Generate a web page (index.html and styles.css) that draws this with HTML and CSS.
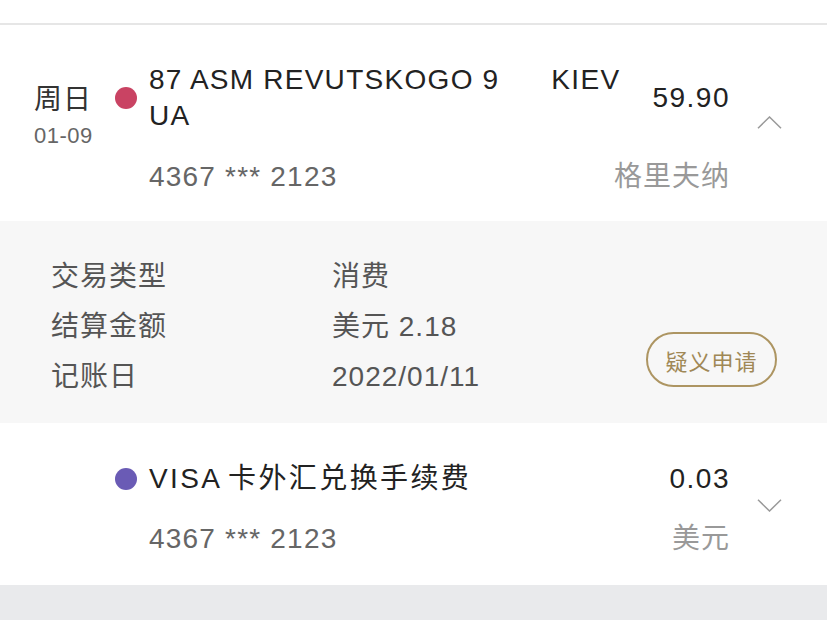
FILE: index.html
```html
<!DOCTYPE html>
<html lang="zh-CN">
<head>
<meta charset="utf-8">
<title>交易明细</title>
<link rel="stylesheet" href="styles.css">
</head>
<body>
<div class="page">
  <div class="topbar"></div>

  <div class="row row-first">
    <div class="date">
      <div class="weekday">周日</div>
      <div class="day">01-09</div>
    </div>
    <div class="body">
      <div class="top">
        <span class="dot dot-red"></span>
        <div class="title title-en">87 ASM REVUTSKOGO 9      KIEV UA</div>
        <div class="amt">59.90</div>
      </div>
      <div class="bottom">
        <div class="card">4367 *** 2123</div>
        <div class="cur">格里夫纳</div>
      </div>
    </div>
    <div class="chev">
      <svg width="25" height="13" viewBox="0 0 25 13"><polyline points="1,12.2 12.5,1 24,12.2" fill="none" stroke="#9a9a9a" stroke-width="1.5"/></svg>
    </div>
  </div>

  <div class="detail">
    <div class="kv">
      <div class="k">交易类型</div><div class="v">消费</div>
      <div class="k">结算金额</div><div class="v">美元 2.18</div>
      <div class="k">记账日</div><div class="v">2022/01/11</div>
    </div>
    <div class="btn">疑义申请</div>
  </div>

  <div class="row row-second">
    <div class="date"></div>
    <div class="body">
      <div class="top">
        <span class="dot dot-purple"></span>
        <div class="title title-cn">VISA 卡外汇兑换手续费</div>
        <div class="amt">0.03</div>
      </div>
      <div class="bottom">
        <div class="card">4367 *** 2123</div>
        <div class="cur">美元</div>
      </div>
    </div>
    <div class="chev">
      <svg width="25" height="13" viewBox="0 0 25 13"><polyline points="1,0.8 12.5,12 24,0.8" fill="none" stroke="#9a9a9a" stroke-width="1.5"/></svg>
    </div>
  </div>
</div>
</body>
</html>
```

FILE: styles.css
```css
html, body {
  margin: 0;
  padding: 0;
}
body {
  background: #e9eaec;
  font-family: "Liberation Sans", "Noto Sans CJK SC", sans-serif;
  width: 827px;
  height: 620px;
  overflow: hidden;
}
.page {
  background: #ffffff;
}
.topbar {
  height: 23px;
  border-bottom: 2px solid #e6e6e6;
}
.row {
  display: flex;
  align-items: center;
  padding: 37px 45px 26px 34px;
  background: #ffffff;
}
.row-second {
  padding-top: 38px;
  padding-bottom: 28px;
}
.date {
  width: 81px;
  align-self: flex-start;
  margin-top: 21px;
  flex: none;
}
.weekday {
  font-size: 28px;
  line-height: 34px;
  color: #333333;
  letter-spacing: 1px;
}
.day {
  margin-top: 6px;
  font-size: 22px;
  line-height: 26px;
  color: #666666;
  letter-spacing: 0.5px;
}
.body {
  flex: 1;
  min-width: 0;
}
.top {
  display: flex;
  align-items: center;
}
.dot {
  width: 22px;
  height: 22px;
  border-radius: 50%;
  margin-right: 12px;
  flex: none;
}
.dot-red {
  background: #c94363;
}
.dot-purple {
  background: #6a5bb5;
}
.title {
  flex: 1;
  white-space: pre-wrap;
  font-size: 28px;
  line-height: 36px;
  color: #222222;
  letter-spacing: 1.2px;
}
.title-en {
  letter-spacing: 1.3px;
  word-spacing: -0.4px;
}
.title-cn {
  letter-spacing: 2.4px;
  word-spacing: -3px;
}
.amt {
  margin-left: 20px;
  font-size: 28px;
  line-height: 36px;
  color: #222222;
  letter-spacing: 1.5px;
}
.bottom {
  display: flex;
  justify-content: space-between;
  padding-left: 34px;
  margin-top: 25px;
}
.row-second .bottom {
  margin-top: 24px;
}
.card {
  font-size: 28px;
  line-height: 36px;
  color: #666666;
  letter-spacing: 1.2px;
}
.cur {
  font-size: 28px;
  line-height: 36px;
  color: #999999;
  letter-spacing: 1px;
}
.chev {
  flex: none;
  width: 25px;
  height: 13px;
  margin-left: 27px;
  margin-bottom: 13px;
}
.row-second .chev {
  margin-bottom: 7px;
}
.chev svg {
  display: block;
}
.detail {
  display: flex;
  align-items: flex-end;
  background: #f7f7f7;
  padding: 31px 50px 21px 51px;
}
.kv {
  flex: 1;
  display: grid;
  grid-template-columns: 281px 1fr;
  font-size: 28px;
  line-height: 50px;
  color: #555555;
  letter-spacing: 1px;
}
.btn {
  flex: none;
  box-sizing: border-box;
  width: 131px;
  height: 55px;
  border: 2px solid #ad9562;
  border-radius: 28px;
  display: flex;
  align-items: center;
  justify-content: center;
  font-size: 22px;
  color: #a08856;
  letter-spacing: 1px;
  margin-bottom: 15px;
}
```
